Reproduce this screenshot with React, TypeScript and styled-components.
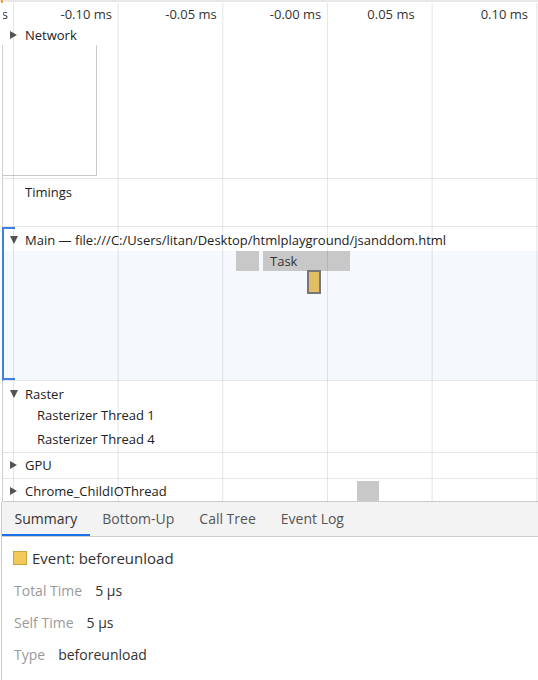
import React from 'react';
import styled, { createGlobalStyle } from 'styled-components';

const Global = createGlobalStyle`
  html, body { margin: 0; padding: 0; background: #fff; }
  body { font-family: "Open Sans", "Noto Sans", sans-serif; color: #333; }
`;

const Page = styled.div`
  width: 538px;
  height: 680px;
  overflow: hidden;
  display: flex;
  flex-direction: column;
  background: #fff;
`;

const Timeline = styled.div`
  position: relative;
  display: flex;
  flex-direction: column;
  font-size: 13px;
  color: #222;
`;

const TopStrip = styled.div`
  height: 3px;
  box-sizing: border-box;
  border-top: 2px solid #e8e8e8;
  display: flex;
`;

const OrangeTick = styled.span`
  width: 2px;
  height: 3px;
  margin-left: 1px;
  margin-top: -2px;
  background: #f0a030;
`;

const Ruler = styled.div`
  height: 21px;
  display: flex;
  align-items: center;
`;

const RulerCell = styled.div<{ $w: number; $pad: number; $offset?: number }>`
  width: ${(p) => p.$w}px;
  margin-left: ${(p) => p.$offset ?? 0}px;
  flex: none;
  display: flex;
  justify-content: flex-end;
  overflow: hidden;
  padding-right: ${(p) => p.$pad}px;
  box-sizing: border-box;
  white-space: nowrap;
  color: #333;
`;

const GridOverlay = styled.div`
  position: absolute;
  left: 0;
  right: 0;
  top: 3px;
  bottom: 0;
  pointer-events: none;
  background-image: linear-gradient(to right, rgba(0, 0, 0, 0.1) 0 1px, transparent 1px);
  background-size: 104.667px 100%;
  background-position: 13px 0;
  background-repeat: repeat-x;
`;

const Label = styled.div<{ $indent: number; $h: number; $top?: number }>`
  height: ${(p) => p.$h}px;
  margin-top: ${(p) => p.$top ?? 0}px;
  display: flex;
  align-items: center;
  padding-left: ${(p) => p.$indent}px;
  white-space: nowrap;
  flex: none;
`;

const Caret = styled.span<{ $open?: boolean }>`
  width: 9px;
  flex: none;
  margin-right: 6px;
  display: flex;
  align-items: center;
  &::before {
    content: '';
    display: block;
    ${(p) =>
      p.$open
        ? 'border-top: 8px solid #555; border-left: 4.5px solid transparent; border-right: 4.5px solid transparent;'
        : 'border-left: 7px solid #555; border-top: 4px solid transparent; border-bottom: 4px solid transparent;'}
  }
`;

const Tracks = styled.div`
  margin-left: 2px;
  border-left: 1px solid #d0d0d0;
  display: flex;
  flex-direction: column;
`;

const Track = styled.div<{ $h: number; $last?: boolean }>`
  position: relative;
  height: ${(p) => p.$h}px;
  box-sizing: border-box;
  border-bottom: 1px solid ${(p) => (p.$last ? '#cccccc' : '#e6e6e6')};
  display: flex;
  flex-direction: column;
`;

const NetworkPanel = styled.div`
  width: 94px;
  height: 131px;
  box-sizing: border-box;
  border-right: 1px solid #c8c8c8;
  border-bottom: 1px solid #c8c8c8;
`;

const MainGroup = styled.div`
  position: relative;
  margin-left: -1px;
  border-left: 2px solid #3f7fdf;
  border-bottom: 1px solid #e6e6e6;
  display: flex;
  flex-direction: column;
  &::before,
  &::after {
    content: '';
    position: absolute;
    left: -2px;
    width: 13px;
    height: 2px;
    background: #3f7fdf;
  }
  &::before { top: 0; }
  &::after { bottom: 0; }
`;

const Flame = styled.div`
  position: relative;
  height: 129px;
  background: #f5f8fd;
`;

const Slice = styled.div<{ $variant?: 'event' }>`
  position: absolute;
  box-sizing: border-box;
  display: flex;
  align-items: center;
  padding-left: 7px;
  color: #333;
  white-space: nowrap;
  overflow: hidden;
  background: ${(p) => (p.$variant === 'event' ? '#e2bf62' : '#c8c8c8')};
  border: ${(p) => (p.$variant === 'event' ? '2px solid #777' : 'none')};
`;

const BottomPanel = styled.div`
  flex: 1;
  margin-left: 1px;
  border-left: 1px solid #cccccc;
  display: flex;
  flex-direction: column;
`;

const TabBar = styled.div`
  height: 35px;
  box-sizing: border-box;
  background: #f3f3f3;
  border-bottom: 1px solid #cdcdcd;
  display: flex;
`;

const Tab = styled.div<{ $active?: boolean }>`
  position: relative;
  padding: 0 12.5px 2px;
  display: flex;
  align-items: center;
  font-size: 14px;
  color: ${(p) => (p.$active ? '#333' : '#555')};
  white-space: nowrap;
  &::after {
    content: '';
    display: ${(p) => (p.$active ? 'block' : 'none')};
    position: absolute;
    left: 0;
    right: 0;
    bottom: 0;
    height: 2px;
    background: #1a73e8;
  }
`;

const Summary = styled.div`
  padding: 11px 0 0 11px;
  display: flex;
  flex-direction: column;
`;

const EventTitle = styled.div`
  height: 20px;
  display: flex;
  align-items: center;
  font-size: 15px;
  color: #333;
  margin-bottom: 6px;
`;

const Swatch = styled.span`
  width: 14px;
  height: 14px;
  box-sizing: border-box;
  border: 1px solid #c9a540;
  background: #f2c85b;
  margin-right: 5px;
  flex: none;
`;

const InfoRow = styled.div`
  height: 32px;
  display: flex;
  align-items: center;
  gap: 13px;
  padding-left: 1px;
  font-size: 14px;
`;

const InfoLabel = styled.span`
  color: #9a9a9a;
`;

const InfoValue = styled.span`
  color: #333;
`;

const rulerCells = [
  { w: 10, pad: 5, offset: 3, text: '-0.15 ms' },
  { w: 104.667, pad: 5.7, text: '-0.10 ms' },
  { w: 104.667, pad: 5.6, text: '-0.05 ms' },
  { w: 104.667, pad: 5.7, text: '-0.00 ms' },
  { w: 104.667, pad: 17, text: '0.05 ms' },
  { w: 104.667, pad: 8.3, text: '0.10 ms' },
];

export default function App() {
  return (
    <Page>
      <Global />
      <Timeline>
        <TopStrip>
          <OrangeTick />
        </TopStrip>
        <Ruler>
          {rulerCells.map((c, i) => (
            <RulerCell key={i} $w={c.w} $pad={c.pad} $offset={c.offset}>
              {c.text}
            </RulerCell>
          ))}
        </Ruler>
        <Label $indent={10} $h={21}>
          <Caret />
          Network
        </Label>
        <Tracks>
          <Track $h={134}>
            <NetworkPanel />
          </Track>
          <Track $h={48}>
            <Label $indent={22} $h={20} $top={3}>
              Timings
            </Label>
          </Track>
          <MainGroup>
            <Label $indent={6} $h={23} $top={1}>
              <Caret $open />
              Main — file:///C:/Users/litan/Desktop/htmlplayground/jsanddom.html
            </Label>
            <Flame>
              <Slice style={{ left: 232, top: 0, width: 23, height: 20 }} />
              <Slice style={{ left: 259, top: 0, width: 87, height: 20 }}>Task</Slice>
              <Slice $variant="event" style={{ left: 303, top: 19, width: 14, height: 24 }} />
            </Flame>
          </MainGroup>
          <Track $h={72}>
            <Label $indent={7} $h={18} $top={4}>
              <Caret $open />
              Raster
            </Label>
            <Label $indent={34} $h={24}>
              Rasterizer Thread 1
            </Label>
            <Label $indent={34} $h={24}>
              Rasterizer Thread 4
            </Label>
          </Track>
          <Track $h={26}>
            <Label $indent={7} $h={24}>
              <Caret />
              GPU
            </Label>
          </Track>
          <Track $h={23} $last>
            <Label $indent={7} $h={24}>
              <Caret />
              Chrome_ChildIOThread
            </Label>
            <Slice style={{ left: 354, top: 2, width: 22, height: 20 }} />
          </Track>
        </Tracks>
        <GridOverlay />
      </Timeline>
      <BottomPanel>
        <TabBar>
          <Tab $active>Summary</Tab>
          <Tab>Bottom-Up</Tab>
          <Tab>Call Tree</Tab>
          <Tab>Event Log</Tab>
        </TabBar>
        <Summary>
          <EventTitle>
            <Swatch />
            Event: beforeunload
          </EventTitle>
          <InfoRow>
            <InfoLabel>Total Time</InfoLabel>
            <InfoValue>5 µs</InfoValue>
          </InfoRow>
          <InfoRow>
            <InfoLabel>Self Time</InfoLabel>
            <InfoValue>5 µs</InfoValue>
          </InfoRow>
          <InfoRow>
            <InfoLabel>Type</InfoLabel>
            <InfoValue>beforeunload</InfoValue>
          </InfoRow>
        </Summary>
      </BottomPanel>
    </Page>
  );
}
